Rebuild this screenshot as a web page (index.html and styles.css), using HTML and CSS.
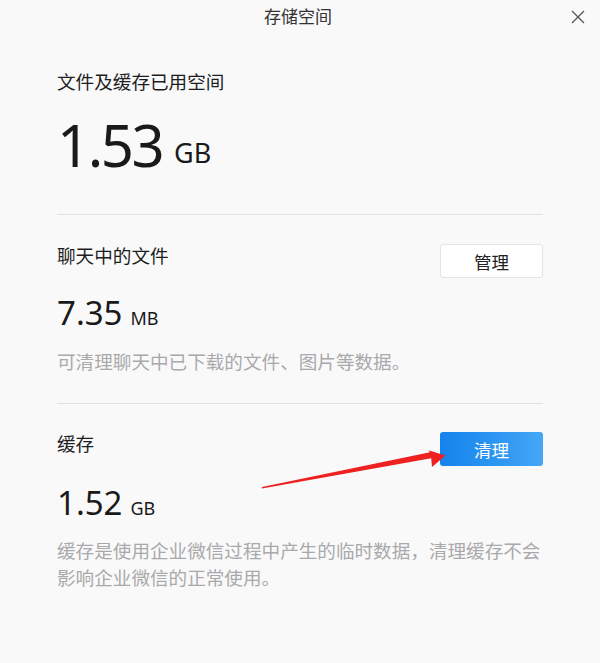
FILE: index.html
```html
<!DOCTYPE html>
<html lang="zh-CN">
<head>
<meta charset="utf-8">
<title>存储空间</title>
<link rel="stylesheet" href="styles.css">
</head>
<body>
<div class="window">
  <header class="titlebar">
    <span class="spacer"></span>
    <h1 class="title">存储空间</h1>
    <button class="close" aria-label="关闭">
      <svg width="14" height="14" viewBox="0 0 14 14"><path d="M1 1 L13 13 M13 1 L1 13" stroke="#555" stroke-width="1.3" fill="none"/></svg>
    </button>
  </header>
  <main class="content">
    <section class="block block-total">
      <div class="label">文件及缓存已用空间</div>
      <div class="size size-big"><span class="num">1.53</span><span class="unit">GB</span></div>
    </section>
    <section class="block block-files">
      <div class="row">
        <div class="label">聊天中的文件</div>
        <button class="btn btn-plain">管理</button>
      </div>
      <div class="size size-small"><span class="num">7.35</span><span class="unit">MB</span></div>
      <p class="desc">可清理聊天中已下载的文件、图片等数据。</p>
    </section>
    <section class="block block-cache">
      <div class="row">
        <div class="label">缓存</div>
        <button class="btn btn-primary">清理</button>
      </div>
      <div class="size size-small size-cache"><span class="num">1.52</span><span class="unit">GB</span></div>
      <p class="desc desc-cache">缓存是使用企业微信过程中产生的临时数据，清理缓存不会影响企业微信的正常使用。</p>
    </section>
  </main>
  <svg class="arrow" width="600" height="663" viewBox="0 0 600 663">
    <polygon points="262,487 430,452.3 428.5,450.3 445.5,455.6 432,467 431.2,458.2 262,488.4" fill="#ee2020"/>
  </svg>
</div>
</body>
</html>
```

FILE: styles.css
```css
* { box-sizing: border-box; }
html, body {
  margin: 0;
  padding: 0;
  background: #f9f9fa;
}
body {
  font-family: "Noto Sans", "Noto Sans CJK SC", sans-serif;
  color: #1e1e1e;
}
.window {
  position: relative;
  width: 600px;
  height: 663px;
  overflow: hidden;
}
.titlebar {
  display: grid;
  grid-template-columns: 1fr auto 1fr;
  align-items: center;
  height: 34px;
}
.title {
  margin: 0 0 0 -4px;
  font-size: 17px;
  font-weight: normal;
  line-height: 34px;
  color: #333;
}
.close {
  justify-self: end;
  margin-right: 15px;
  margin-top: 0;
  width: 14px;
  height: 14px;
  padding: 0;
  border: 0;
  background: none;
  display: flex;
}
.content {
  padding: 0 57px;
}
.block {
  border-bottom: 1px solid #e3e3e5;
}
.block-total {
  padding-top: 35px;
  padding-bottom: 40px;
}
.block-files {
  padding-top: 28px;
  padding-bottom: 28px;
}
.block-cache {
  padding-top: 27px;
  border-bottom: 0;
}
.label {
  font-size: 18.6px;
  line-height: 26px;
  color: #1e1e1e;
}
.row {
  display: flex;
  justify-content: space-between;
  align-items: flex-start;
}
.btn {
  width: 103px;
  height: 34px;
  margin-top: 1px;
  border-radius: 3px;
  font-family: "Noto Sans CJK SC", sans-serif;
  font-size: 17.5px;
  padding: 0;
  cursor: pointer;
}
.btn-plain {
  background: #ffffff;
  border: 1px solid #e4e4e6;
  color: #222;
}
.btn-primary {
  background: linear-gradient(90deg, #1583ec 0%, #2d96f2 55%, #45a7f6 100%);
  border: 0;
  color: #fff;
}
.size {
  white-space: nowrap;
}
.size-big {
  margin-top: 21px;
  height: 58px;
  line-height: 58px;
}
.size-big .num {
  font-size: 58px;
  letter-spacing: -2.5px;
  color: #1a1a1a;
}
.size-big .unit {
  font-size: 27px;
  margin-left: 12px;
  vertical-align: 4px;
  color: #1a1a1a;
}
.size-small {
  margin-top: 15px;
  height: 40px;
  line-height: 40px;
}
.size-cache {
  margin-top: 17px;
}
.size-small .num {
  font-size: 33px;
  color: #1a1a1a;
}
.size-small .unit {
  font-size: 18px;
  margin-left: 8px;
  color: #1a1a1a;
}
.desc {
  margin: 15px 0 0;
  font-size: 18.6px;
  line-height: 27px;
  color: #a9a9ab;
}
.desc-cache {
  margin-top: 14px;
}
.arrow {
  position: absolute;
  left: 0;
  top: 0;
  pointer-events: none;
}
```
